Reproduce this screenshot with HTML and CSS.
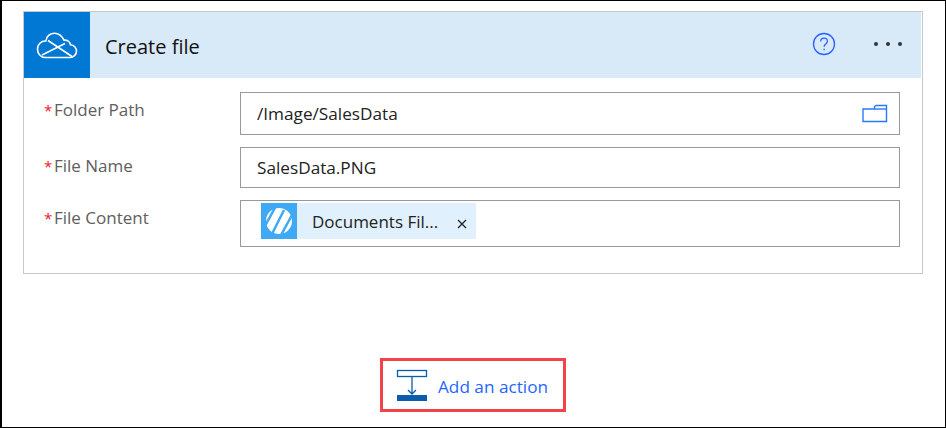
FILE: index.html
```html
<!DOCTYPE html>
<html lang="en">
<head>
  <meta charset="UTF-8" />
  <title>Create file</title>
  <link rel="stylesheet" href="styles.css">
</head>
<body>
  <div class="frame">
    <div class="card">
      <div class="card-header">
        <div class="logo">
          <svg width="42" height="27" viewBox="0 0 42 27" fill="none" stroke="#fff" stroke-width="1.600">
            <path d="M9 25.500h25c3.500 0 6.500-2.700 6.500-6.300 0-3.500-2.700-6.200-6-6.400C34 9.700 31 7.700 28 8.200 25.800 3.700 22.500 1.200 18.500 1.200c-4.500 0-8.200 3.300-8.700 7.800C5 8.700 1.500 12.500 1.500 17c0 4.800 3.400 8.500 7.500 8.500z"/>
            <path d="M6 23 29 11.500 M12 8.500 36 24.500"/>
          </svg>
        </div>
        <div class="card-title">Create file</div>
        <svg class="help" width="24" height="24" viewBox="0 0 24 24" fill="none" stroke="#2962ff" stroke-width="1.300">
          <circle cx="12" cy="12" r="10.500"/>
          <path d="M8.700 9.500c0-2 1.500-3.300 3.400-3.300s3.300 1.300 3.300 3c0 2.700-3.300 2.700-3.300 5.500"/>
          <path d="M12.100 16.700v1.600"/>
        </svg>
        <div class="more"><span></span><span></span><span></span></div>
      </div>
      <div class="card-body">
        <div class="row row-path">
          <label class="field-label"><span class="req">*</span>Folder Path</label>
          <div class="input">
            <span class="input-text">/Image/SalesData</span>
            <svg class="folder" width="26" height="19" viewBox="0 0 26 19" fill="none" stroke="#2979ff" stroke-width="1.400">
              <path d="M1 17.500V5h11.500V2.500L14 1.500h10.500v16z"/>
              <path d="M12.500 5h12"/>
            </svg>
          </div>
        </div>
        <div class="row row-name">
          <label class="field-label"><span class="req">*</span>File Name</label>
          <div class="input">
            <span class="input-text">SalesData.PNG</span>
          </div>
        </div>
        <div class="row row-content">
          <label class="field-label"><span class="req">*</span>File Content</label>
          <div class="input input-token">
            <div class="token">
              <div class="token-icon">
                <svg width="26" height="26" viewBox="0 0 26 26">
                  <circle cx="13" cy="13" r="13" fill="#fff"/>
                  <path d="M-1 18 10 -2 M6.500 25 18 2 M14 29 26 7" stroke="#3fa9f5" stroke-width="2.500" fill="none"/>
                </svg>
              </div>
              <span class="token-text">Documents Fil...</span>
              <svg class="token-x" width="10" height="10" viewBox="0 0 10 10" stroke="#222" stroke-width="1.300"><path d="M1 1l8 8M9 1l-8 8"/></svg>
            </div>
          </div>
        </div>
      </div>
    </div>
    <div class="action-wrap">
      <div class="action">
        <svg width="32" height="32" viewBox="0 0 32 32" fill="none">
          <rect x="1.500" y="1.500" width="29" height="6" stroke="#0b5cab" stroke-width="1.300"/>
          <path d="M16 8v17M12 21l4 4 4-4" stroke="#0b5cab" stroke-width="1.300"/>
          <rect x="1" y="26" width="30" height="6" fill="#0b5cab"/>
        </svg>
        <span class="action-text">Add an action</span>
      </div>
    </div>
  </div>
</body>
</html>
```

FILE: styles.css
```css
* {
  box-sizing: border-box;
}

html, body {
  margin: 0;
  height: 100%;
}

body {
  font-family: 'Open Sans', 'Noto Sans', sans-serif;
  background: #fff;
}

.frame {
  height: 428px;
  border: 2px solid #000;
  border-width: 1px 1px 1px 2px;
  padding: 10px 22px 0 21px;
}

.card {
  width: 900px;
  height: 263px;
  border: 1px solid #c8c8c8;
}

.card-header {
  display: flex;
  align-items: center;
  height: 66px;
  margin-right: 1px;
  background: #d8e9f8;
}

.logo {
  display: flex;
  align-items: center;
  justify-content: center;
  width: 66px;
  height: 66px;
  background: #0078d4;
}

.card-title {
  flex: 1;
  margin-left: 15px;
  padding-top: 2px;
  font-size: 20px;
  color: #111;
}

.help {
  margin: 0 38px 2px 0;
}

.more {
  display: flex;
  gap: 8px;
  margin: 0 19px 2px 0;
}

.more span {
  width: 4px;
  height: 4px;
  border-radius: 50%;
  background: #333;
}

.card-body {
  padding: 14px 22px 0 20px;
}

.row {
  display: flex;
}

.row-name {
  margin-top: 12px;
}

.row-content {
  margin-top: 12px;
}

.field-label {
  width: 196px;
  padding-top: 7px;
  font-size: 17px;
  line-height: 22px;
  color: #605e5c;
}

.row-name .field-label {
  padding-top: 8px;
}

.req {
  display: inline-block;
  width: 10px;
  font-size: 15px;
  color: #f0142f;
}

.input {
  display: flex;
  align-items: center;
  flex: 1;
  border: 1px solid #999;
  padding: 0 11px 0 16px;
}

.row-path .input {
  height: 43px;
}

.row-name .input {
  height: 41px;
}

.row-content .input {
  height: 47px;
}

.input-text {
  flex: 1;
  font-size: 17.200px;
  color: #222;
}

.input-token {
  align-items: flex-start;
  padding: 2px 0 0 20px;
}

.token {
  display: flex;
  align-items: center;
  height: 36px;
  background: #e1f0fd;
}

.token-icon {
  display: flex;
  align-items: center;
  justify-content: center;
  width: 36px;
  height: 36px;
  background: #3fa9f5;
}

.token-text {
  margin-left: 15px;
  font-size: 17px;
  color: #222;
}

.token-x {
  margin: 5px 9px 0 19px;
}

.action-wrap {
  display: flex;
  justify-content: center;
  margin-top: 84px;
}

.action {
  display: flex;
  align-items: center;
  width: 186px;
  height: 54px;
  border: 3px solid #f2434b;
  padding-left: 13px;
}

.action-text {
  margin-left: 10px;
  padding-top: 2px;
  font-size: 17.200px;
  color: #1f66ff;
}
```
